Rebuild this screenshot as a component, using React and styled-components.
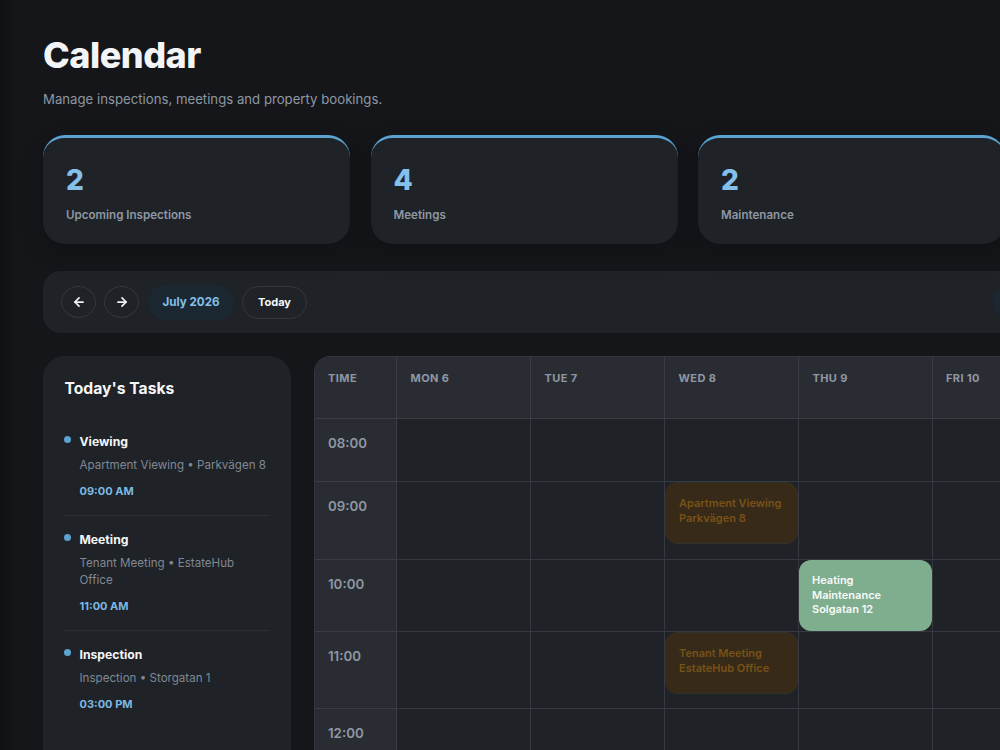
import React from "react";
import styled, { createGlobalStyle } from "styled-components";
import { ArrowLeft, ArrowRight } from "lucide-react";

const GlobalStyle = createGlobalStyle`
  html, body {
    margin: 0;
    height: 750px;
    overflow: hidden;
    background: linear-gradient(90deg, #101114, #14161a 20px);
    font-family: Inter, "Liberation Sans", sans-serif;
  }
  * { box-sizing: border-box; }
`;

const stats = [
  { value: 2, label: "Upcoming Inspections" },
  { value: 4, label: "Meetings" },
  { value: 2, label: "Maintenance" },
];

const tasks = [
  { title: "Viewing", text: "Apartment Viewing • Parkvägen 8", time: "09:00 AM" },
  { title: "Meeting", text: "Tenant Meeting • EstateHub Office", time: "11:00 AM" },
  { title: "Inspection", text: "Inspection • Storgatan 1", time: "03:00 PM" },
];

const days = ["MON 6", "TUE 7", "WED 8", "THU 9", "FRI 10"];

const rows = [
  { time: "08:00", height: 63, events: {} },
  {
    time: "09:00",
    height: 78,
    events: { 2: { kind: "viewing", lines: ["Apartment Viewing", "Parkvägen 8"] } },
  },
  {
    time: "10:00",
    height: 72,
    events: { 3: { kind: "maintenance", lines: ["Heating", "Maintenance", "Solgatan 12"] } },
  },
  {
    time: "11:00",
    height: 77,
    events: { 2: { kind: "viewing", lines: ["Tenant Meeting", "EstateHub Office"] } },
  },
  { time: "12:00", height: 78, events: {} },
];

const App = () => {
  return (
    <Page>
      <GlobalStyle />
      <Title>Calendar</Title>
      <Subtitle>Manage inspections, meetings and property bookings.</Subtitle>

      <StatGrid>
        {stats.map((s) => (
          <StatCard key={s.label}>
            <StatValue>{s.value}</StatValue>
            <StatLabel>{s.label}</StatLabel>
          </StatCard>
        ))}
      </StatGrid>

      <Toolbar>
        <RoundButton><ArrowLeft size={14} strokeWidth={3} /></RoundButton>
        <RoundButton><ArrowRight size={14} strokeWidth={3} /></RoundButton>
        <MonthPill>July 2026</MonthPill>
        <TodayButton>Today</TodayButton>
        <ViewPill />
      </Toolbar>

      <Content>
        <TaskPanel>
          <PanelTitle>Today's Tasks</PanelTitle>
          {tasks.map((t) => (
            <Task key={t.title}>
              <Dot />
              <div>
                <TaskTitle>{t.title}</TaskTitle>
                <TaskText>{t.text}</TaskText>
                <TaskTime>{t.time}</TaskTime>
              </div>
            </Task>
          ))}
        </TaskPanel>

        <Schedule>
          <HeadCell>TIME</HeadCell>
          {days.map((d) => (
            <HeadCell key={d} $day>{d}</HeadCell>
          ))}
          {rows.map((r) => (
            <React.Fragment key={r.time}>
              <TimeCell style={{ height: r.height }}>{r.time}</TimeCell>
              {days.map((d, i) => (
                <DayCell key={d}>
                  {r.events[i] && (
                    <Event $kind={r.events[i].kind}>
                      {r.events[i].lines.map((l) => (
                        <div key={l}>{l}</div>
                      ))}
                    </Event>
                  )}
                </DayCell>
              ))}
            </React.Fragment>
          ))}
        </Schedule>
      </Content>
    </Page>
  );
};

const Page = styled.div`
  width: 1160px;
  padding: 36px 0 0 43px;
`;

const Title = styled.h1`
  margin: 0;
  font-size: 36px;
  line-height: 38px;
  font-weight: 800;
  letter-spacing: -0.5px;
  color: #f3f4f5;
`;

const Subtitle = styled.p`
  margin: 16px 0 0;
  font-size: 13.2px;
  line-height: 18px;
  color: #8e98a3;
`;

const StatGrid = styled.div`
  display: grid;
  grid-template-columns: repeat(3, 307px);
  gap: 20.5px;
  margin-top: 27px;
`;

const StatCard = styled.div`
  height: 109px;
  padding: 25px 23px;
  background: #1f2227;
  border-top: 3px solid #5ba3d0;
  border-radius: 22px;
  box-shadow: 0 8px 24px rgba(0, 0, 0, 0.22);
`;

const StatValue = styled.div`
  font-size: 28px;
  line-height: 34px;
  font-weight: 800;
  color: #84c0ea;
`;

const StatLabel = styled.div`
  margin-top: 11px;
  font-size: 11.6px;
  line-height: 15px;
  font-weight: 600;
  color: #8e98a3;
`;

const Toolbar = styled.div`
  display: flex;
  align-items: center;
  gap: 8px;
  height: 62px;
  margin-top: 27px;
  padding: 0 18px;
  background: #1f2227;
  border-radius: 18px;
`;

const RoundButton = styled.button`
  display: flex;
  align-items: center;
  justify-content: center;
  width: 35px;
  height: 32px;
  padding: 0;
  background: transparent;
  border: 1px solid #33363d;
  border-radius: 50%;
  color: #f0f1f2;
`;

const MonthPill = styled.div`
  width: 86px;
  height: 35px;
  margin-left: 1px;
  line-height: 35px;
  text-align: center;
  font-size: 11.6px;
  font-weight: 700;
  color: #84c0ea;
  background: #1b2831;
  border-radius: 18px;
`;

const TodayButton = styled.button`
  height: 33px;
  padding: 0 15px;
  font-family: inherit;
  font-size: 11px;
  font-weight: 700;
  color: #f5f6f7;
  background: transparent;
  border: 1px solid #33363d;
  border-radius: 17px;
`;

const ViewPill = styled.div`
  width: 86px;
  height: 35px;
  margin-left: 678px;
  background: #1b2831;
  border-radius: 18px;
`;

const Content = styled.div`
  display: flex;
  align-items: flex-start;
  gap: 23px;
  margin-top: 23px;
`;

const TaskPanel = styled.aside`
  flex: 0 0 248px;
  height: 420px;
  padding: 23px 21px;
  background: #1f2227;
  border-radius: 22px;
`;

const PanelTitle = styled.h2`
  margin: 0 0 19px;
  padding-left: 0.5px;
  font-size: 15.7px;
  line-height: 20px;
  font-weight: 700;
  color: #f5f6f7;
`;

const Task = styled.div`
  display: flex;
  gap: 8.5px;
  padding: 16px 0 16px;
  border-bottom: 1px solid #2a2d33;
  &:last-child { border-bottom: none; }
`;

const Dot = styled.span`
  flex: none;
  width: 7px;
  height: 7px;
  margin-top: 2px;
  background: #5ba3d0;
  border-radius: 50%;
`;

const TaskTitle = styled.div`
  font-size: 12.2px;
  line-height: 15px;
  font-weight: 700;
  color: #f5f6f7;
`;

const TaskText = styled.div`
  margin-top: 8px;
  font-size: 11.6px;
  line-height: 17px;
  color: #7f8994;
`;

const TaskTime = styled.div`
  margin-top: 10px;
  font-size: 11px;
  line-height: 15px;
  font-weight: 700;
  color: #7cb8e2;
`;

const Schedule = styled.div`
  display: grid;
  grid-template-columns: 82px repeat(3, 134px) 133.5px 134px;
  align-self: flex-start;
  border-top: 1px solid #33363d;
  border-left: 1px solid #33363d;
  border-top-left-radius: 16px;
  overflow: hidden;
  background: #1f2227;
`;

const HeadCell = styled.div`
  height: 62px;
  padding: 15px ${(p) => (p.$day ? "13.5px" : "13px")};
  font-size: 11px;
  line-height: 13px;
  font-weight: 700;
  letter-spacing: 0.4px;
  color: #8e98a3;
  background: #2a2c34;
  border-right: 1px solid #3a3d44;
  border-bottom: 1px solid #3a3d44;
`;

const TimeCell = styled.div`
  padding: 16px 13px;
  font-size: 13.3px;
  line-height: 17px;
  font-weight: 600;
  color: #8e98a3;
  background: #2a2c34;
  border-right: 1px solid #3a3d44;
  border-bottom: 1px solid #3a3d44;
`;

const DayCell = styled.div`
  background: #1f2227;
  border-right: 1px solid #363941;
  border-bottom: 1px solid #363941;
`;

const Event = styled.div`
  padding: 13px 13px;
  font-size: 11px;
  line-height: 14.5px;
  font-weight: 600;
  border-radius: 12px;
  ${(p) =>
    p.$kind === "maintenance"
      ? `height: 100%; background: #7fae8f; color: #f7faf8;`
      : `height: 62px; background: #372a19; color: #785216; border: 1px solid #33302a; padding: 13px 13px;`}
`;

export default App;
